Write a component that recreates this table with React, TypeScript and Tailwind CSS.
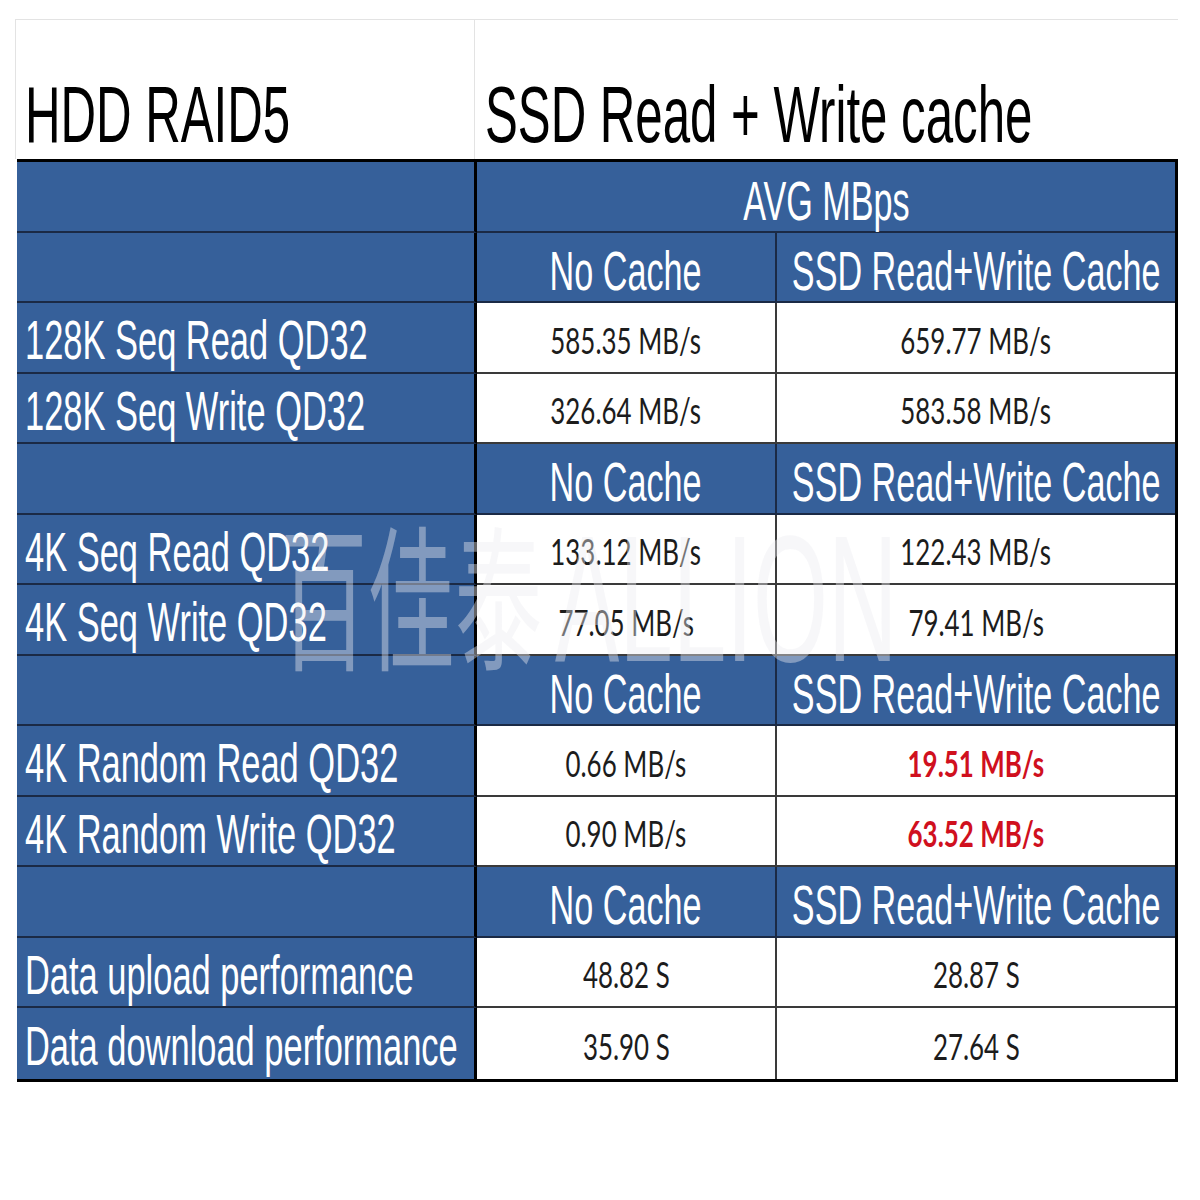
import type { ReactNode } from 'react';

type Row =
  | { kind: 'avg' }
  | { kind: 'head' }
  | { kind: 'data'; label: string; a: string; b: string; hot?: boolean };

const ROWS: Row[] = [
  { kind: 'avg' },
  { kind: 'head' },
  { kind: 'data', label: '128K Seq Read QD32', a: '585.35 MB/s', b: '659.77 MB/s' },
  { kind: 'data', label: '128K Seq Write QD32', a: '326.64 MB/s', b: '583.58 MB/s' },
  { kind: 'head' },
  { kind: 'data', label: '4K Seq Read QD32', a: '133.12 MB/s', b: '122.43 MB/s' },
  { kind: 'data', label: '4K Seq Write QD32', a: '77.05 MB/s', b: '79.41 MB/s' },
  { kind: 'head' },
  { kind: 'data', label: '4K Random Read QD32', a: '0.66 MB/s', b: '19.51 MB/s', hot: true },
  { kind: 'data', label: '4K Random Write QD32', a: '0.90 MB/s', b: '63.52 MB/s', hot: true },
  { kind: 'head' },
  { kind: 'data', label: 'Data upload performance', a: '48.82 S', b: '28.87 S' },
  { kind: 'data', label: 'Data download performance', a: '35.90 S', b: '27.64 S' },
];

// the source is an Excel screenshot stretched vertically, so every text run is squeezed
function Squeeze({ children, left }: { children: ReactNode; left?: boolean }) {
  return (
    <span
      className={
        left
          ? 'inline-block whitespace-nowrap origin-left scale-x-[0.615]'
          : 'inline-block whitespace-nowrap origin-center scale-x-[0.61]'
      }
    >
      {children}
    </span>
  );
}

function Value({ text, hot }: { text: string; hot?: boolean }) {
  return (
    <span
      className={
        hot
          ? "inline-block whitespace-nowrap scale-x-[0.72] font-['Lato',sans-serif] font-bold text-[36px] leading-none text-[#d0101e]"
          : "inline-block whitespace-nowrap scale-x-[0.72] font-['Lato',sans-serif] text-[36px] leading-none text-[#1c1c1c]"
      }
    >
      {text}
    </span>
  );
}

export default function App() {
  return (
    <div className="relative w-[1200px] h-[1200px] overflow-hidden bg-white pl-[15px] pt-[19px] font-['Liberation_Sans',Arial,sans-serif]">
      {/* title strip */}
      <div className="flex w-[1163px] h-[140px] border-t border-l border-[#e3e3e3] text-[80px] leading-none text-black">
        <div className="w-[459px] shrink-0 border-r border-[#e3e3e3] flex items-end pl-[9px] pb-[4px]">
          <Squeeze left>HDD RAID5</Squeeze>
        </div>
        <div className="flex-1 min-w-0 flex items-end pl-[10px] pb-[4px]">
          <Squeeze left>SSD Read + Write cache</Squeeze>
        </div>
      </div>

      {/* table */}
      <div className="relative ml-[2px] w-[1161px] border-t-[3px] border-b-[3px] border-r-[3px] border-black text-[56px] leading-none text-white">
        {ROWS.map((row, i) => {
          const last = i === ROWS.length - 1;
          const navy = last ? '' : 'border-b-2 border-[#1b2a45]';
          const gray = last ? '' : 'border-b-2 border-[#3a3a3a]';
          return (
            <div key={i} className="flex h-[70.5px]">
              <div
                className={`w-[460px] shrink-0 bg-[#36609a] border-r-[3px] border-r-black flex items-center pl-[8px] pt-[6px] ${navy}`}
              >
                {row.kind === 'data' && <Squeeze left>{row.label}</Squeeze>}
              </div>
              {row.kind === 'avg' && (
                <div className={`flex-1 min-w-0 bg-[#36609a] flex items-center justify-center pt-[10px] ${navy}`}>
                  <Squeeze>AVG MBps</Squeeze>
                </div>
              )}
              {row.kind === 'head' && (
                <>
                  <div
                    className={`w-[300px] shrink-0 bg-[#36609a] border-r-2 border-r-[#1b2a45] flex items-center justify-center pt-[8px] ${navy}`}
                  >
                    <Squeeze>No Cache</Squeeze>
                  </div>
                  <div className={`flex-1 min-w-0 bg-[#36609a] flex items-center justify-center pt-[8px] ${navy}`}>
                    <Squeeze>SSD Read+Write Cache</Squeeze>
                  </div>
                </>
              )}
              {row.kind === 'data' && (
                <>
                  <div
                    className={`w-[300px] shrink-0 bg-white border-r-2 border-r-[#3a3a3a] flex items-center justify-center pt-[5px] ${gray}`}
                  >
                    <Value text={row.a} />
                  </div>
                  <div className={`flex-1 min-w-0 bg-white flex items-center justify-center pt-[5px] ${gray}`}>
                    <Value text={row.b} hot={row.hot} />
                  </div>
                </>
              )}
            </div>
          );
        })}

        {/* watermark */}
        <div className="absolute left-[263px] top-[350px] pointer-events-none text-[156px] leading-none text-[rgba(235,235,240,0.42)] font-['Noto_Sans_CJK_SC',sans-serif]">
          <span className="inline-block whitespace-nowrap origin-left scale-x-[0.56]">百佳泰</span>
        </div>
        <div className="absolute left-[538px] top-[347px] pointer-events-none text-[180px] leading-none text-[rgba(235,235,240,0.42)]">
          <span className="inline-block whitespace-nowrap origin-left scale-x-[0.535]">ALLION</span>
        </div>
      </div>
    </div>
  );
}
